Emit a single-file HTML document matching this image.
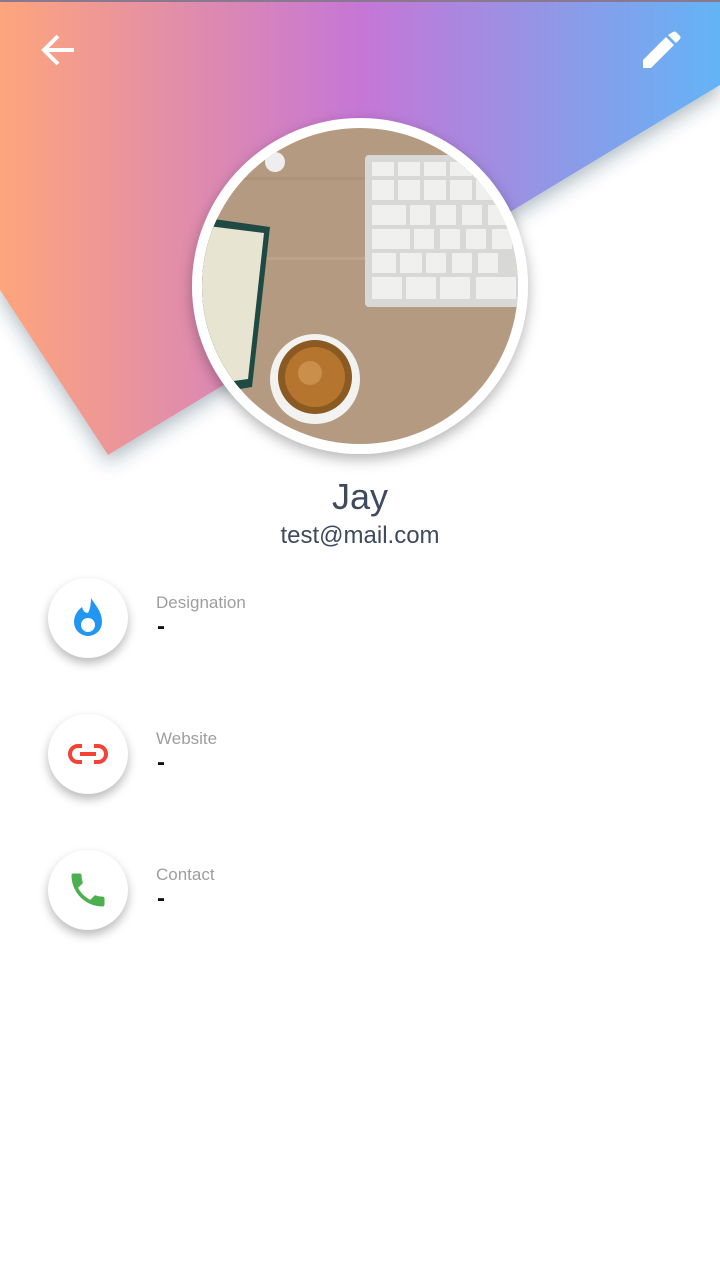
<!DOCTYPE html>
<html><head><meta charset="utf-8"><style>
html,body{margin:0;padding:0;width:720px;height:1283px;background:#fff;overflow:hidden;font-family:"Liberation Sans",sans-serif;position:relative}
.abs{position:absolute}
.ic{position:absolute;left:48px;width:80px;height:80px;border-radius:50%;background:#fff;box-shadow:0 5px 10px rgba(0,0,0,.28);display:flex;align-items:center;justify-content:center}
.lbl{position:absolute;left:156px;font-size:17px;color:#9e9e9e}
.val{position:absolute;left:157px;font-size:24px;color:#111;font-weight:bold}
</style></head><body>
<svg class="abs" style="left:0;top:0" width="720" height="500">
<defs>
<linearGradient id="g" x1="0" y1="0" x2="1" y2="0">
<stop offset="0" stop-color="#fea57c"/><stop offset="0.5" stop-color="#c676d6"/><stop offset="1" stop-color="#63b4f6"/>
</linearGradient>
<filter id="s" x="-20%" y="-20%" width="140%" height="150%"><feDropShadow dx="0" dy="8" stdDeviation="9" flood-color="#2a4a60" flood-opacity="0.35"/></filter>
</defs>
<polygon points="0,0 720,0 720,85 108,455 0,290" fill="url(#g)" filter="url(#s)"/>
<rect x="0" y="0" width="720" height="2" fill="#8a7890"/>
<path d="M74 50H45M58 36L44 50L58 64" stroke="#fff" stroke-width="4" fill="none"/>
<path d="M643 60V68H651L674 45L666 37ZM668 35L676 43L680 39Q681 37 680 36L676 32Q675 31 673 32Z" fill="#fff"/>
</svg>
<svg class="abs" style="left:170px;top:97px" width="380" height="390">
<defs>
<filter id="s2" x="-20%" y="-20%" width="140%" height="140%"><feDropShadow dx="0" dy="5" stdDeviation="7" flood-color="#000" flood-opacity="0.3"/></filter>
<clipPath id="c"><circle cx="170" cy="169" r="158"/></clipPath>
</defs>
<circle cx="190" cy="189" r="168" fill="#fff" filter="url(#s2)"/>
<g clip-path="url(#c)" transform="translate(20,20)">
<rect width="340" height="340" fill="#b49a80"/>
<rect x="0" y="60" width="340" height="3" fill="#a58b70" opacity=".5"/>
<rect x="0" y="140" width="340" height="3" fill="#c5ad94" opacity=".5"/>
<rect x="175" y="38" width="160" height="152" rx="4" fill="#d8d8d6"/>
<g fill="#f0f0ee">
<rect x="182" y="45" width="22" height="14"/><rect x="208" y="45" width="22" height="14"/><rect x="234" y="45" width="22" height="14"/><rect x="260" y="45" width="22" height="14"/>
<rect x="182" y="63" width="22" height="20"/><rect x="208" y="63" width="22" height="20"/><rect x="234" y="63" width="22" height="20"/><rect x="260" y="63" width="22" height="20"/><rect x="286" y="63" width="22" height="20"/>
<rect x="182" y="88" width="34" height="20"/><rect x="220" y="88" width="20" height="20"/><rect x="246" y="88" width="20" height="20"/><rect x="272" y="88" width="20" height="20"/><rect x="298" y="88" width="20" height="20"/>
<rect x="182" y="112" width="38" height="20"/><rect x="224" y="112" width="20" height="20"/><rect x="250" y="112" width="20" height="20"/><rect x="276" y="112" width="20" height="20"/><rect x="302" y="112" width="20" height="20"/>
<rect x="182" y="136" width="24" height="20"/><rect x="210" y="136" width="22" height="20"/><rect x="236" y="136" width="20" height="20"/><rect x="262" y="136" width="20" height="20"/><rect x="288" y="136" width="20" height="20"/>
<rect x="182" y="160" width="30" height="22"/><rect x="216" y="160" width="30" height="22"/><rect x="250" y="160" width="30" height="22"/><rect x="286" y="160" width="40" height="22"/>
</g>
<polygon points="10,100 80,110 62,270 0,280" fill="#1f4a44"/>
<polygon points="10,108 74,116 58,262 0,270" fill="#e8e4d2"/>
<circle cx="125" cy="262" r="45" fill="#f2f2f0"/>
<circle cx="125" cy="260" r="37" fill="#8a5a22"/>
<circle cx="125" cy="260" r="30" fill="#b5752e"/>
<circle cx="120" cy="256" r="12" fill="#d19a58" opacity=".7"/>
<circle cx="85" cy="45" r="10" fill="#eee"/>
</g>
</svg>
<div class="abs" style="left:0;width:720px;top:476px;text-align:center;font-size:36px;color:#3f4a5e">Jay</div>
<div class="abs" style="left:0;width:720px;top:522px;text-align:center;font-size:24px;color:#3f4a5e">test@mail.com</div>

<div class="ic" style="top:578px"><svg width="40" height="44" viewBox="0 0 40 44"><path d="M23 2C27 9 34 15 34 26A14 14 0 0 1 6 26C6 19 10 14 14 11C15 15 17 17 20 17C22 13 23 8 23 2ZM20 22C16 22 13 25 13 29A7 7 0 0 0 27 29C27 25 24 22 20 22Z" fill="#2196f3" fill-rule="evenodd"/></svg></div>
<div class="lbl" style="top:593px">Designation</div><div class="val" style="top:613px">-</div>

<div class="ic" style="top:714px"><svg width="44" height="44" viewBox="0 0 44 44"><path d="M16 14H12A8 8 0 0 0 12 30H16M28 14H32A8 8 0 0 1 32 30H28M14 22H30" stroke="#f44336" stroke-width="4" fill="none"/></svg></div>
<div class="lbl" style="top:729px">Website</div><div class="val" style="top:749px">-</div>

<div class="ic" style="top:850px"><svg width="44" height="44" viewBox="0 0 24 24"><path d="M6.6 10.8c1.4 2.8 3.8 5.1 6.6 6.6l2.2-2.2c.3-.3.7-.4 1-.2 1.1.4 2.3.6 3.6.6.6 0 1 .4 1 1V20c0 .6-.4 1-1 1C10.6 21 3 13.4 3 4c0-.6.4-1 1-1h3.5c.6 0 1 .4 1 1 0 1.3.2 2.5.6 3.6.1.3 0 .7-.2 1z" fill="#4caf50"/></svg></div>
<div class="lbl" style="top:865px">Contact</div><div class="val" style="top:885px">-</div>
</body></html>
